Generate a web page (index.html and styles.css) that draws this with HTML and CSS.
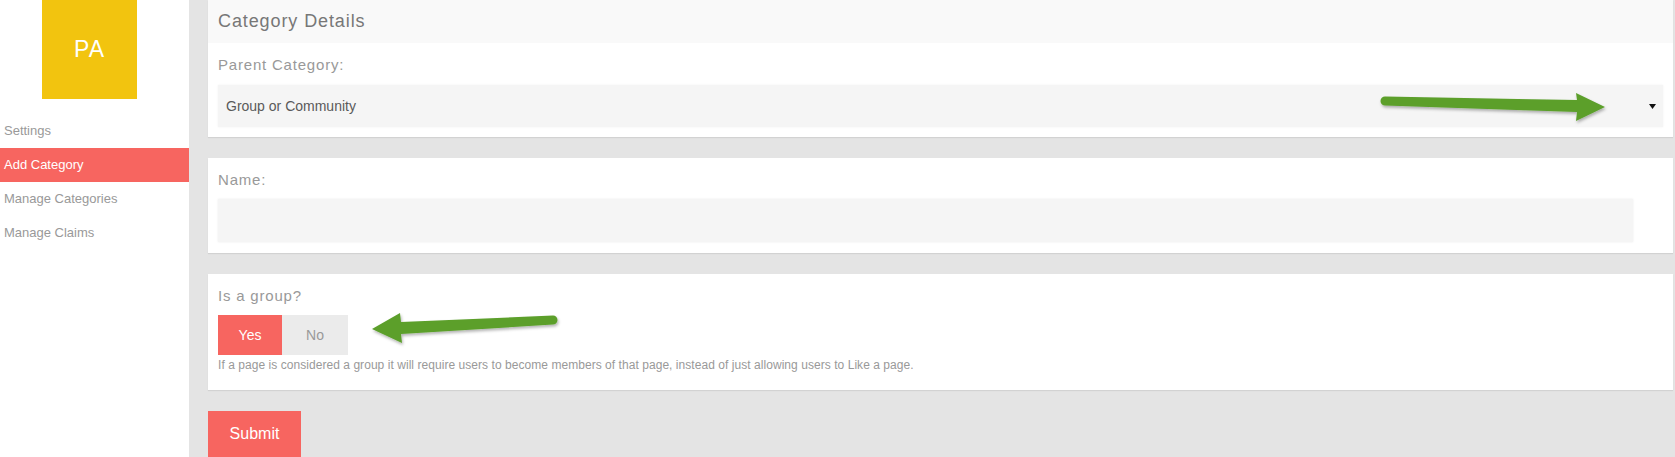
FILE: index.html
```html
<!DOCTYPE html>
<html lang="en">
<head>
  <meta charset="UTF-8">
  <meta name="viewport" content="width=device-width, initial-scale=1.0">
  <title>Add Category</title>
  <link rel="stylesheet" href="styles.css">
</head>
<body>
  <div class="sidebar">
    <div class="logo">PA</div>
    <ul class="nav">
      <li>Settings</li>
      <li class="active">Add Category</li>
      <li>Manage Categories</li>
      <li>Manage Claims</li>
    </ul>
  </div>

  <div class="main">
    <div class="card">
      <div class="card-header">Category Details</div>
      <div class="card-body">
        <label class="field-label">Parent Category:</label>
        <div class="select">
          <span>Group or Community</span>
          <svg class="caret" width="7" height="5" viewBox="0 0 7 5"><path d="M0 0h7L3.5 5z" fill="#111"/></svg>
        </div>
      </div>
    </div>

    <div class="card">
      <div class="card-body">
        <label class="field-label">Name:</label>
        <div class="text-input"></div>
      </div>
    </div>

    <div class="card">
      <div class="card-body group-body">
        <label class="field-label">Is a group?</label>
        <div class="toggle">
          <span class="toggle-btn on">Yes</span>
          <span class="toggle-btn">No</span>
        </div>
        <p class="help">If a page is considered a group it will require users to become members of that page, instead of just allowing users to Like a page.</p>
      </div>
    </div>

    <button class="submit">Submit</button>
  </div>

  <!-- annotation arrows -->
  <svg class="arrows" width="1675" height="457" viewBox="0 0 1675 457">
    <defs>
      <filter id="shadow" x="-10%" y="-50%" width="120%" height="200%">
        <feDropShadow dx="1" dy="2" stdDeviation="1.5" flood-color="#000" flood-opacity="0.3"/>
      </filter>
    </defs>
    <path filter="url(#shadow)" fill="#5b9f2b" d="M1385 96.5 L1577 100 L1576 93 L1605 107 L1576 121 L1577 112 L1385 105.5 A4.5 4.5 0 0 1 1385 96.5 Z"/>
    <path filter="url(#shadow)" fill="#5b9f2b" d="M553 315.5 L401 322 L400 313 L372 329 L402 343 L401 334 L553 324.5 A4.5 4.5 0 0 0 553 315.5 Z"/>
  </svg>
</body>
</html>
```

FILE: styles.css
```css
body {
  font-family: "Liberation Sans", Arial, sans-serif;
  margin: 0;
  padding: 0;
  display: flex;
  height: 457px;
  overflow: hidden;
  background-color: #e4e4e4;
}

.sidebar {
  width: 189px;
  flex-shrink: 0;
  background-color: #fff;
}

.logo {
  width: 95px;
  height: 99px;
  margin-left: 42px;
  background-color: #f2c40f;
  color: #fff;
  font-size: 23px;
  letter-spacing: 1px;
  display: flex;
  align-items: center;
  justify-content: center;
}

.nav {
  list-style: none;
  margin: 15px 0 0;
  padding: 0;
}

.nav li {
  height: 34px;
  line-height: 34px;
  padding-left: 4px;
  font-size: 13px;
  color: #999;
}

.nav li.active {
  background-color: #f76560;
  color: #fff;
}

.main {
  flex: 1;
  padding: 0 2px 0 19px;
  display: flex;
  flex-direction: column;
  align-items: flex-start;
}

.card {
  align-self: stretch;
  background-color: #fff;
  box-shadow: 0 1px 1px rgba(0, 0, 0, 0.08);
  margin-bottom: 21px;
}

.card-header {
  height: 43px;
  line-height: 42px;
  padding-left: 10px;
  background-color: #f9f9f9;
  color: #777;
  font-size: 18px;
  letter-spacing: 0.9px;
}

.card-body {
  padding: 0 10px 10px;
}

.field-label {
  display: block;
  padding: 12px 0 11px;
  line-height: 19px;
  font-size: 15px;
  letter-spacing: 0.8px;
  color: #999;
}

.select {
  height: 42px;
  padding: 0 7px 0 8px;
  background-color: #f5f5f5;
  box-shadow: 0 0 2px rgba(0, 0, 0, 0.06);
  display: flex;
  align-items: center;
  justify-content: space-between;
  font-size: 14px;
  color: #5a5a5a;
}

.text-input {
  height: 43px;
  margin-top: -1px;
  margin-bottom: 1px;
  width: calc(100% - 30px);
  background-color: #f5f5f5;
  box-shadow: 0 0 2px rgba(0, 0, 0, 0.08);
}

.group-body {
  padding-bottom: 18px;
}

.toggle {
  display: flex;
  margin-top: -1px;
}

.toggle-btn {
  width: 64px;
  height: 40px;
  line-height: 40px;
  text-align: center;
  font-size: 14px;
  background-color: #ebebeb;
  color: #999;
}

.toggle-btn + .toggle-btn {
  width: 66px;
}

.toggle-btn.on {
  background-color: #f76560;
  color: #fff;
}

.help {
  margin: 3px 0 0;
  font-size: 12px;
  line-height: 14px;
  letter-spacing: 0.05px;
  color: #999;
}

.submit {
  width: 93px;
  height: 46px;
  padding: 0;
  border: none;
  background-color: #f76560;
  color: #fff;
  font-family: inherit;
  font-size: 16px;
}

.arrows {
  position: absolute;
  left: 0;
  top: 0;
  pointer-events: none;
}
```
